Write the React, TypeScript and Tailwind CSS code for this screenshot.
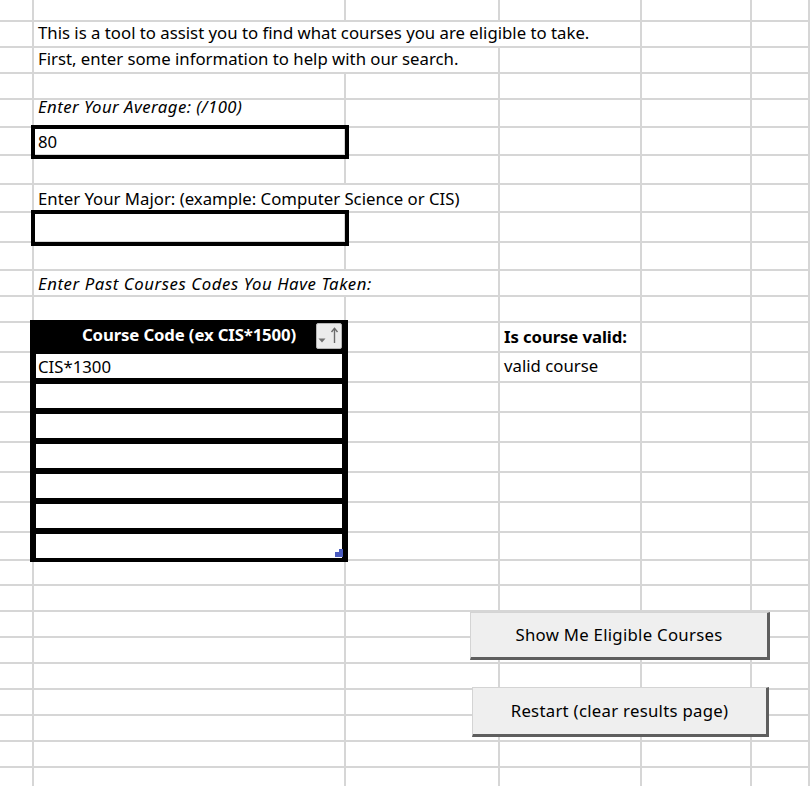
import React from "react";

const ROW_HEIGHTS = [
  22, 26, 26, 26, 28, 28, 29, 28, 30, 28, 26, 26, 30, 30, 30, 30, 30, 30, 30, 28,
  25, 26, 26, 26, 26, 26, 26, 26, 30,
];

type CellSpec = {
  text?: string;
  cls?: string;
  noRight?: boolean;
  box?: boolean;
};

const CELLS: Record<number, Record<number, CellSpec>> = {
  1: {
    1: { text: "This is a tool to assist you to find what courses you are eligible to take.", cls: "pb-[3px]", noRight: true },
    2: { noRight: true },
  },
  2: {
    1: { text: "First, enter some information to help with our search.", cls: "pb-[3.5px]", noRight: true },
  },
  4: {
    1: { text: "Enter Your Average: (/100)", cls: "pb-[9px] italic tracking-[0.45px]" },
  },
  5: {
    1: { text: "80", cls: "pb-[2px]", box: true },
  },
  7: {
    1: { text: "Enter Your Major: (example: Computer Science or CIS)", cls: "pb-[2px]", noRight: true },
  },
  8: {
    1: { box: true },
  },
  10: {
    1: { text: "Enter Past Courses Codes You Have Taken:", cls: "pb-[1px] italic tracking-[0.58px]", noRight: true },
  },
  12: {
    3: { text: "Is course valid:", cls: "pb-[4px] font-bold tracking-[-0.1px]" },
  },
  13: {
    3: { text: "valid course", cls: "pb-[5px]" },
  },
};

const TABLE_ROWS = 8;
const TABLE_START = 12;

function Cell({ spec, col }: { spec?: CellSpec; col: number }) {
  const right = spec?.noRight ? "" : "border-r-2";
  const box = spec?.box ? "relative z-10 outline-4 outline-black -outline-offset-1" : "";
  const padX = col === 0 ? "" : "pl-[4px]";
  return (
    <div
      className={`flex items-end whitespace-nowrap border-b-2 border-[#d6d6d6] ${right} ${box} ${padX} ${spec?.cls ?? ""}`}
    >
      {spec?.text ? <span className="relative z-10 leading-[20px]">{spec.text}</span> : null}
    </div>
  );
}

function FilterButton() {
  return (
    <div className="absolute right-[0px] top-[3px] h-[26px] w-[26px] rounded-[2px] border border-[#b4b4b4] bg-[#ebebeb]">
      <svg width="24" height="24" viewBox="0 0 24 24" className="block">
        <polygon points="1.5,14.5 8.5,14.5 5,18.5" fill="#707070" />
        <line x1="17.5" y1="4.5" x2="17.5" y2="19" stroke="#6a6a6a" strokeWidth="1.4" />
        <polyline points="14.5,8 17.5,4.3 20.5,8" fill="none" stroke="#6a6a6a" strokeWidth="1.4" />
      </svg>
    </div>
  );
}

function CourseTable() {
  const rows = ["CIS*1300", "", "", "", "", "", ""];
  return (
    <div className="relative z-20 col-start-2 row-start-[13] row-span-8 -ml-[4px] -mr-[2px] -mt-[3px] -mb-[1px] flex flex-col gap-[6px] bg-black px-[6px] pb-[4px]">
      <div className="relative flex h-[28px] items-center justify-center pt-[2px]">
        <span className="font-bold leading-[20px] tracking-[-0.14px] text-white">Course Code (ex CIS*1500)</span>
        <FilterButton />
      </div>
      {rows.map((r, i) => (
        <div key={i} className="relative flex h-[24px] items-end bg-white pb-[1px] pl-[2px]">
          <span className="leading-[20px]">{r}</span>
          {i === rows.length - 1 ? (
            <svg width="8" height="8" viewBox="0 0 8 8" className="absolute -right-[1px] bottom-[1px]">
              <polygon points="4,0 8,0 8,8 0,8 0,3 4,3" fill="#4a5bbf" />
            </svg>
          ) : null}
        </div>
      ))}
    </div>
  );
}

function SheetButton({ label, cls }: { label: string; cls: string }) {
  return (
    <div
      className={`absolute z-30 flex items-center justify-center border-l border-t border-[#d4d4d4] border-r-[3px] border-b-[3px] border-r-[#5e5e5e] border-b-[#5e5e5e] bg-[#efefef] text-[16.75px] tracking-[0.28px] ${cls}`}
    >
      {label}
    </div>
  );
}

export default function App() {
  const cells: React.ReactNode[] = [];
  ROW_HEIGHTS.forEach((_, r) => {
    for (let c = 0; c < 6; c++) {
      if (c === 1 && r >= TABLE_START && r < TABLE_START + TABLE_ROWS) continue;
      cells.push(<Cell key={`${r}-${c}`} col={c} spec={CELLS[r]?.[c]} />);
    }
  });

  return (
    <div
      className="relative h-[786px] w-[810px] overflow-hidden bg-white text-[16.75px] text-black"
      style={{ fontFamily: '"Noto Sans", "Open Sans", sans-serif' }}
    >
      <div className="grid grid-cols-[34px_312px_154px_142px_110px_1fr] grid-rows-[22px_26px_26px_26px_28px_28px_29px_28px_30px_28px_26px_26px_30px_30px_30px_30px_30px_30px_30px_28px_25px_26px_26px_26px_26px_26px_26px_26px_30px]">
        <CourseTable />
        {cells}
      </div>
      <SheetButton label="Show Me Eligible Courses" cls="left-[470px] top-[612px] h-[48px] w-[300px]" />
      <SheetButton label="Restart (clear results page)" cls="left-[472px] top-[687px] h-[50px] w-[297px]" />
    </div>
  );
}
